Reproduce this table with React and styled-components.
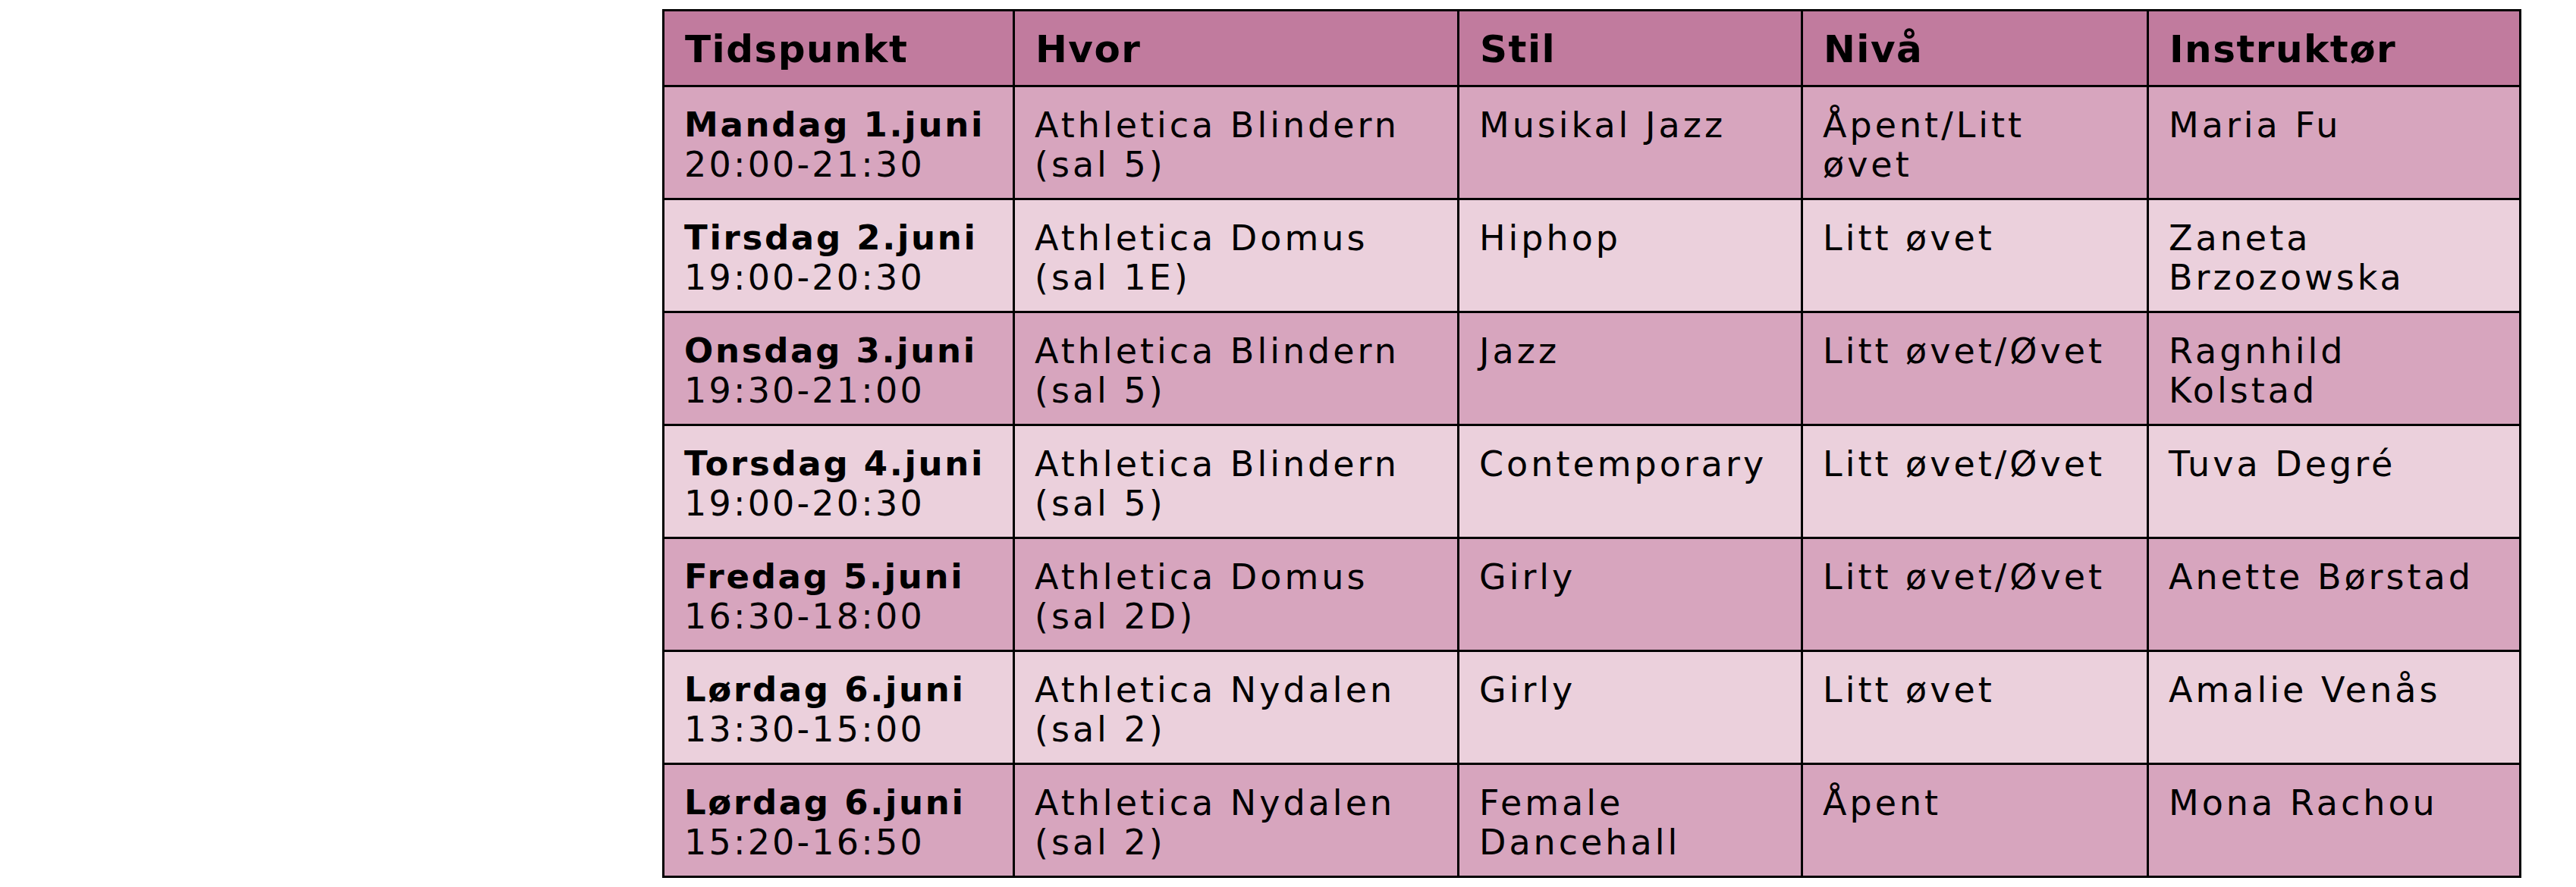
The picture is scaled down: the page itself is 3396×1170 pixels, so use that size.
import React from "react";
import styled, { createGlobalStyle } from "styled-components";

const GlobalStyle = createGlobalStyle`
  html, body {
    margin: 0;
    padding: 0;
    background: #ffffff;
  }
  body {
    font-family: "DejaVu Sans", Verdana, sans-serif;
    color: #000;
  }
`;

const Page = styled.div`
  width: 3396px;
  height: 1170px;
  box-sizing: border-box;
  padding: 12px 0 0 873px;
  background: #ffffff;
  overflow: hidden;
`;

const Table = styled.table`
  border-collapse: collapse;
  table-layout: fixed;
  width: 2448px;
  border: 3px solid #000;
  font-family: "DejaVu Sans", Verdana, sans-serif;
`;

const HeadRow = styled.tr`
  height: 100px;
  background: #c17b9e;
`;

const HeadCell = styled.th`
  border: 3px solid #000;
  padding: 20px 10px 0 27px;
  vertical-align: top;
  text-align: left;
  font-size: 50px;
  line-height: 60px;
  font-weight: 700;
  letter-spacing: 1.5px;
  white-space: nowrap;
`;

const Row = styled.tr`
  height: 149px;
  background: ${(p) => (p.$shade === "dark" ? "#d7a5be" : "#ebd0dc")};
`;

const Cell = styled.td`
  border: 3px solid #000;
  padding: 24px 10px 0 26px;
  vertical-align: top;
  font-size: 46px;
  line-height: 52px;
  font-weight: 400;
  letter-spacing: 4px;
`;

const Line = styled.div`
  white-space: nowrap;
`;

const Day = styled.div`
  white-space: nowrap;
  font-size: 45px;
  font-weight: 700;
  letter-spacing: 2.7px;
`;

const Time = styled.div`
  white-space: nowrap;
  font-weight: 400;
  letter-spacing: 3.2px;
`;

const columns = [
  { title: "Tidspunkt", width: 462 },
  { title: "Hvor", width: 586 },
  { title: "Stil", width: 453 },
  { title: "Nivå", width: 456 },
  { title: "Instruktør", width: 491 },
];

const rows = [
  { day: "Mandag 1.juni", time: "20:00-21:30", where: ["Athletica Blindern", "(sal 5)"], style: ["Musikal Jazz"], level: ["Åpent/Litt", "øvet"], teacher: ["Maria Fu"] },
  { day: "Tirsdag 2.juni", time: "19:00-20:30", where: ["Athletica Domus", "(sal 1E)"], style: ["Hiphop"], level: ["Litt øvet"], teacher: ["Zaneta", "Brzozowska"] },
  { day: "Onsdag 3.juni", time: "19:30-21:00", where: ["Athletica Blindern", "(sal 5)"], style: ["Jazz"], level: ["Litt øvet/Øvet"], teacher: ["Ragnhild", "Kolstad"] },
  { day: "Torsdag 4.juni", time: "19:00-20:30", where: ["Athletica Blindern", "(sal 5)"], style: ["Contemporary"], level: ["Litt øvet/Øvet"], teacher: ["Tuva Degré"] },
  { day: "Fredag 5.juni", time: "16:30-18:00", where: ["Athletica Domus", "(sal 2D)"], style: ["Girly"], level: ["Litt øvet/Øvet"], teacher: ["Anette Børstad"] },
  { day: "Lørdag 6.juni", time: "13:30-15:00", where: ["Athletica Nydalen", "(sal 2)"], style: ["Girly"], level: ["Litt øvet"], teacher: ["Amalie Venås"] },
  { day: "Lørdag 6.juni", time: "15:20-16:50", where: ["Athletica Nydalen", "(sal 2)"], style: ["Female", "Dancehall"], level: ["Åpent"], teacher: ["Mona Rachou"] },
];

const Lines = ({ items }) => items.map((t, i) => <Line key={i}>{t}</Line>);

export default function App() {
  return (
    <>
      <GlobalStyle />
      <Page>
        <Table>
          <colgroup>
            {columns.map((c) => (
              <col key={c.title} style={{ width: c.width }} />
            ))}
          </colgroup>
          <thead>
            <HeadRow>
              {columns.map((c) => (
                <HeadCell key={c.title}>{c.title}</HeadCell>
              ))}
            </HeadRow>
          </thead>
          <tbody>
            {rows.map((r, i) => (
              <Row key={i} $shade={i % 2 === 0 ? "dark" : "light"}>
                <Cell>
                  <Day>{r.day}</Day>
                  <Time>{r.time}</Time>
                </Cell>
                <Cell><Lines items={r.where} /></Cell>
                <Cell><Lines items={r.style} /></Cell>
                <Cell><Lines items={r.level} /></Cell>
                <Cell><Lines items={r.teacher} /></Cell>
              </Row>
            ))}
          </tbody>
        </Table>
      </Page>
    </>
  );
}
